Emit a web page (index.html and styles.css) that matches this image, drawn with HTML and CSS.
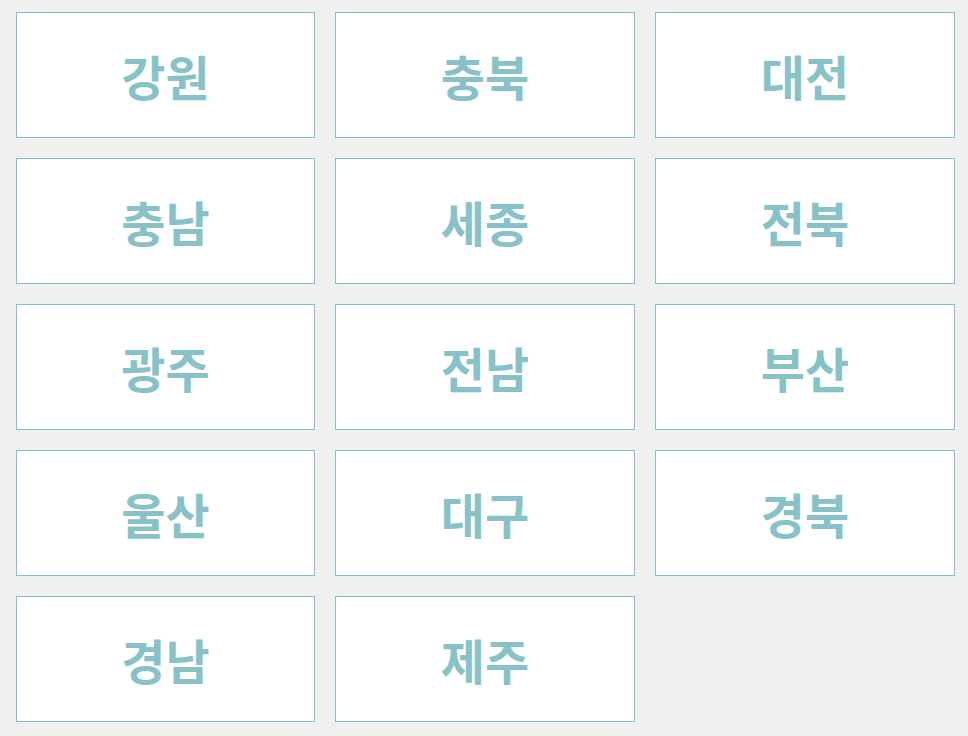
FILE: index.html
```html
<!DOCTYPE html>
<html lang="ko">
<head>
  <meta charset="UTF-8" />
  <meta name="viewport" content="width=device-width, initial-scale=1.0"/>
  <title>지역 선택</title>
  <link rel="stylesheet" href="styles.css">
</head>
<body>
  <!-- Region list -->
  <section class="region-grid">
    <button class="region-btn">강원</button>
    <button class="region-btn">충북</button>
    <button class="region-btn">대전</button>
    <button class="region-btn">충남</button>
    <button class="region-btn">세종</button>
    <button class="region-btn">전북</button>
    <button class="region-btn">광주</button>
    <button class="region-btn">전남</button>
    <button class="region-btn">부산</button>
    <button class="region-btn">울산</button>
    <button class="region-btn">대구</button>
    <button class="region-btn">경북</button>
    <button class="region-btn">경남</button>
    <button class="region-btn">제주</button>
  </section>
</body>
</html>
```

FILE: styles.css
```css
* {
  margin: 0;
  padding: 0;
  box-sizing: border-box;
  font-family: 'Noto Sans CJK KR', 'Noto Sans', sans-serif;
}

body {
  background-color: #f0f0f0;
}

.region-grid {
  display: grid;
  grid-template-columns: 299px 300px 300px;
  grid-auto-rows: 126px;
  gap: 20px;
  margin: 12px 0 0 16px;
}

.region-btn {
  display: flex;
  align-items: center;
  justify-content: center;
  padding-bottom: 1px;
  background-color: #fff;
  border: 1px solid #7cc4cc;
  color: #86c2c8;
  font-size: 48px;
  font-weight: bold;
  cursor: pointer;
}
```
